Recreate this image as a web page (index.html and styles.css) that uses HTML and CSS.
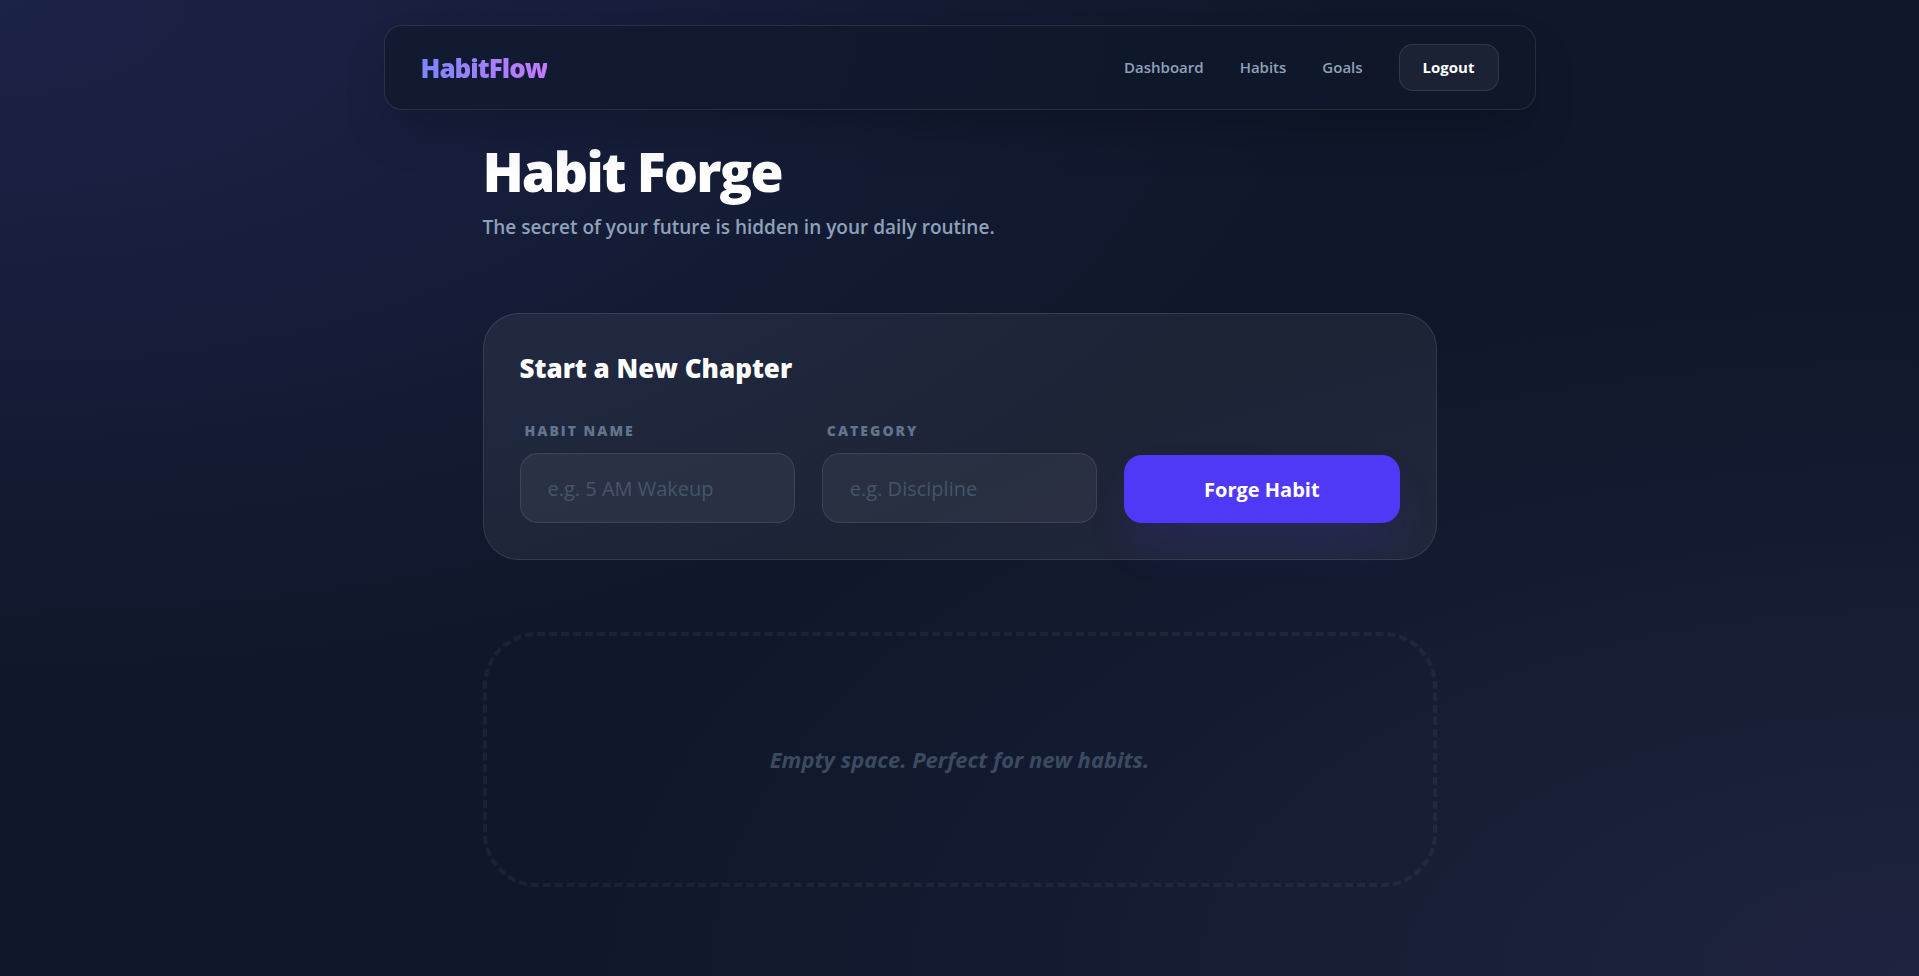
FILE: index.html
```html
<!DOCTYPE html>
<html lang="en">
<head>
<meta charset="utf-8">
<meta name="viewport" content="width=device-width, initial-scale=1">
<title>HabitFlow</title>
<link rel="stylesheet" href="styles.css">
</head>
<body>
<nav class="nav">
  <a class="brand" href="#">HabitFlow</a>
  <div class="nav-links">
    <a class="nav-link" href="#">Dashboard</a>
    <a class="nav-link" href="#">Habits</a>
    <a class="nav-link" href="#">Goals</a>
    <button class="logout" type="button">Logout</button>
  </div>
</nav>
<main class="page">
  <header class="intro">
    <h1 class="title">Habit Forge</h1>
    <p class="subtitle">The secret of your future is hidden in your daily routine.</p>
  </header>
  <section class="card">
    <h2 class="card-title">Start a New Chapter</h2>
    <form class="form">
      <div class="field">
        <label class="label" for="habit-name">Habit Name</label>
        <input class="input" id="habit-name" type="text" placeholder="e.g. 5 AM Wakeup">
      </div>
      <div class="field">
        <label class="label" for="category">Category</label>
        <input class="input" id="category" type="text" placeholder="e.g. Discipline">
      </div>
      <button class="submit" type="button">Forge Habit</button>
    </form>
  </section>
  <section class="empty">
    <p class="empty-text">Empty space. Perfect for new habits.</p>
  </section>
</main>
</body>
</html>
```
FILE: styles.css
```css
*,
*::before,
*::after {
  box-sizing: border-box;
}

body {
  margin: 0;
  min-height: 100vh;
  padding: 25px 27px 54px;
  font-family: "Open Sans", "Noto Sans", sans-serif;
  color: #fff;
  background-color: #0f172a;
  background-image:
    radial-gradient(at 0% 0%, rgba(99, 102, 241, 0.15) 0, transparent 50%),
    radial-gradient(at 100% 100%, rgba(167, 139, 250, 0.1) 0, transparent 50%);
  background-attachment: fixed;
}

h1,
h2,
p {
  margin: 0;
}

button,
input {
  font-family: inherit;
}

.nav {
  display: flex;
  align-items: center;
  justify-content: space-between;
  max-width: 1152px;
  margin: 0 auto;
  padding: 18px 36px;
  border: 1px solid rgba(255, 255, 255, 0.1);
  border-radius: 18px;
  background: rgba(15, 23, 42, 0.6);
  box-shadow: 0 25px 50px -12px rgba(0, 0, 0, 0.25);
}

.brand {
  font-size: 26px;
  line-height: 36px;
  font-weight: 800;
  letter-spacing: -1px;
  text-decoration: none;
  color: transparent;
  background: linear-gradient(to right, #7c86ff, #c27aff);
  background-clip: text;
  -webkit-background-clip: text;
}

.nav-links {
  display: flex;
  align-items: center;
  gap: 36px;
}

.nav-link {
  font-size: 15px;
  line-height: 23px;
  font-weight: 600;
  color: #90a1b9;
  text-decoration: none;
}

.logout {
  padding: 11px 23px;
  border: 1px solid rgba(255, 255, 255, 0.1);
  border-radius: 14px;
  font-size: 15px;
  line-height: 23px;
  font-weight: 700;
  color: #fff;
  background: rgba(255, 255, 255, 0.05);
}

.page {
  max-width: 954px;
  margin: 0 auto;
  padding-top: 27px;
}

.intro {
  margin-bottom: 72px;
}

.title {
  font-size: 54px;
  line-height: 68px;
  font-weight: 800;
  letter-spacing: -2px;
  width: fit-content;
  color: transparent;
  background: linear-gradient(to bottom, #f1f1f1, #fff 60%);
  background-clip: text;
  -webkit-background-clip: text;
}

.subtitle {
  margin-top: 8px;
  font-size: 19px;
  line-height: 28px;
  font-weight: 600;
  color: #90a1b9;
}

.card {
  padding: 36px;
  border: 1px solid rgba(255, 255, 255, 0.1);
  border-radius: 36px;
  background: rgba(255, 255, 255, 0.06);
}

.card-title {
  margin-bottom: 36px;
  font-size: 26px;
  line-height: 36px;
  font-weight: 800;
}

.form {
  display: grid;
  grid-template-columns: repeat(3, minmax(0, 1fr));
  align-items: end;
  gap: 27px;
}

.field {
  display: flex;
  flex-direction: column;
  gap: 13px;
}

.label {
  padding-left: 5px;
  font-size: 14px;
  line-height: 18px;
  font-weight: 800;
  letter-spacing: 2px;
  text-transform: uppercase;
  color: #62748e;
}

.input {
  width: 100%;
  height: 70px;
  padding: 0 27px;
  border: 1px solid rgba(255, 255, 255, 0.1);
  border-radius: 18px;
  font-size: 20px;
  color: #fff;
  background: rgba(255, 255, 255, 0.05);
}

.input::placeholder {
  color: #45556c;
  opacity: 1;
}

.submit {
  height: 68px;
  border: 0;
  border-radius: 18px;
  font-size: 20px;
  font-weight: 700;
  color: #fff;
  background: #4f39f6;
  box-shadow: 0 25px 50px -12px rgba(79, 57, 246, 0.2);
}

.empty {
  margin-top: 72px;
  padding: 108px 36px;
  border: 4px dashed rgba(255, 255, 255, 0.05);
  border-radius: 54px;
  text-align: center;
}

.empty-text {
  font-size: 22px;
  line-height: 31px;
  font-weight: 700;
  font-style: italic;
  color: #3c4a61;
}
```
